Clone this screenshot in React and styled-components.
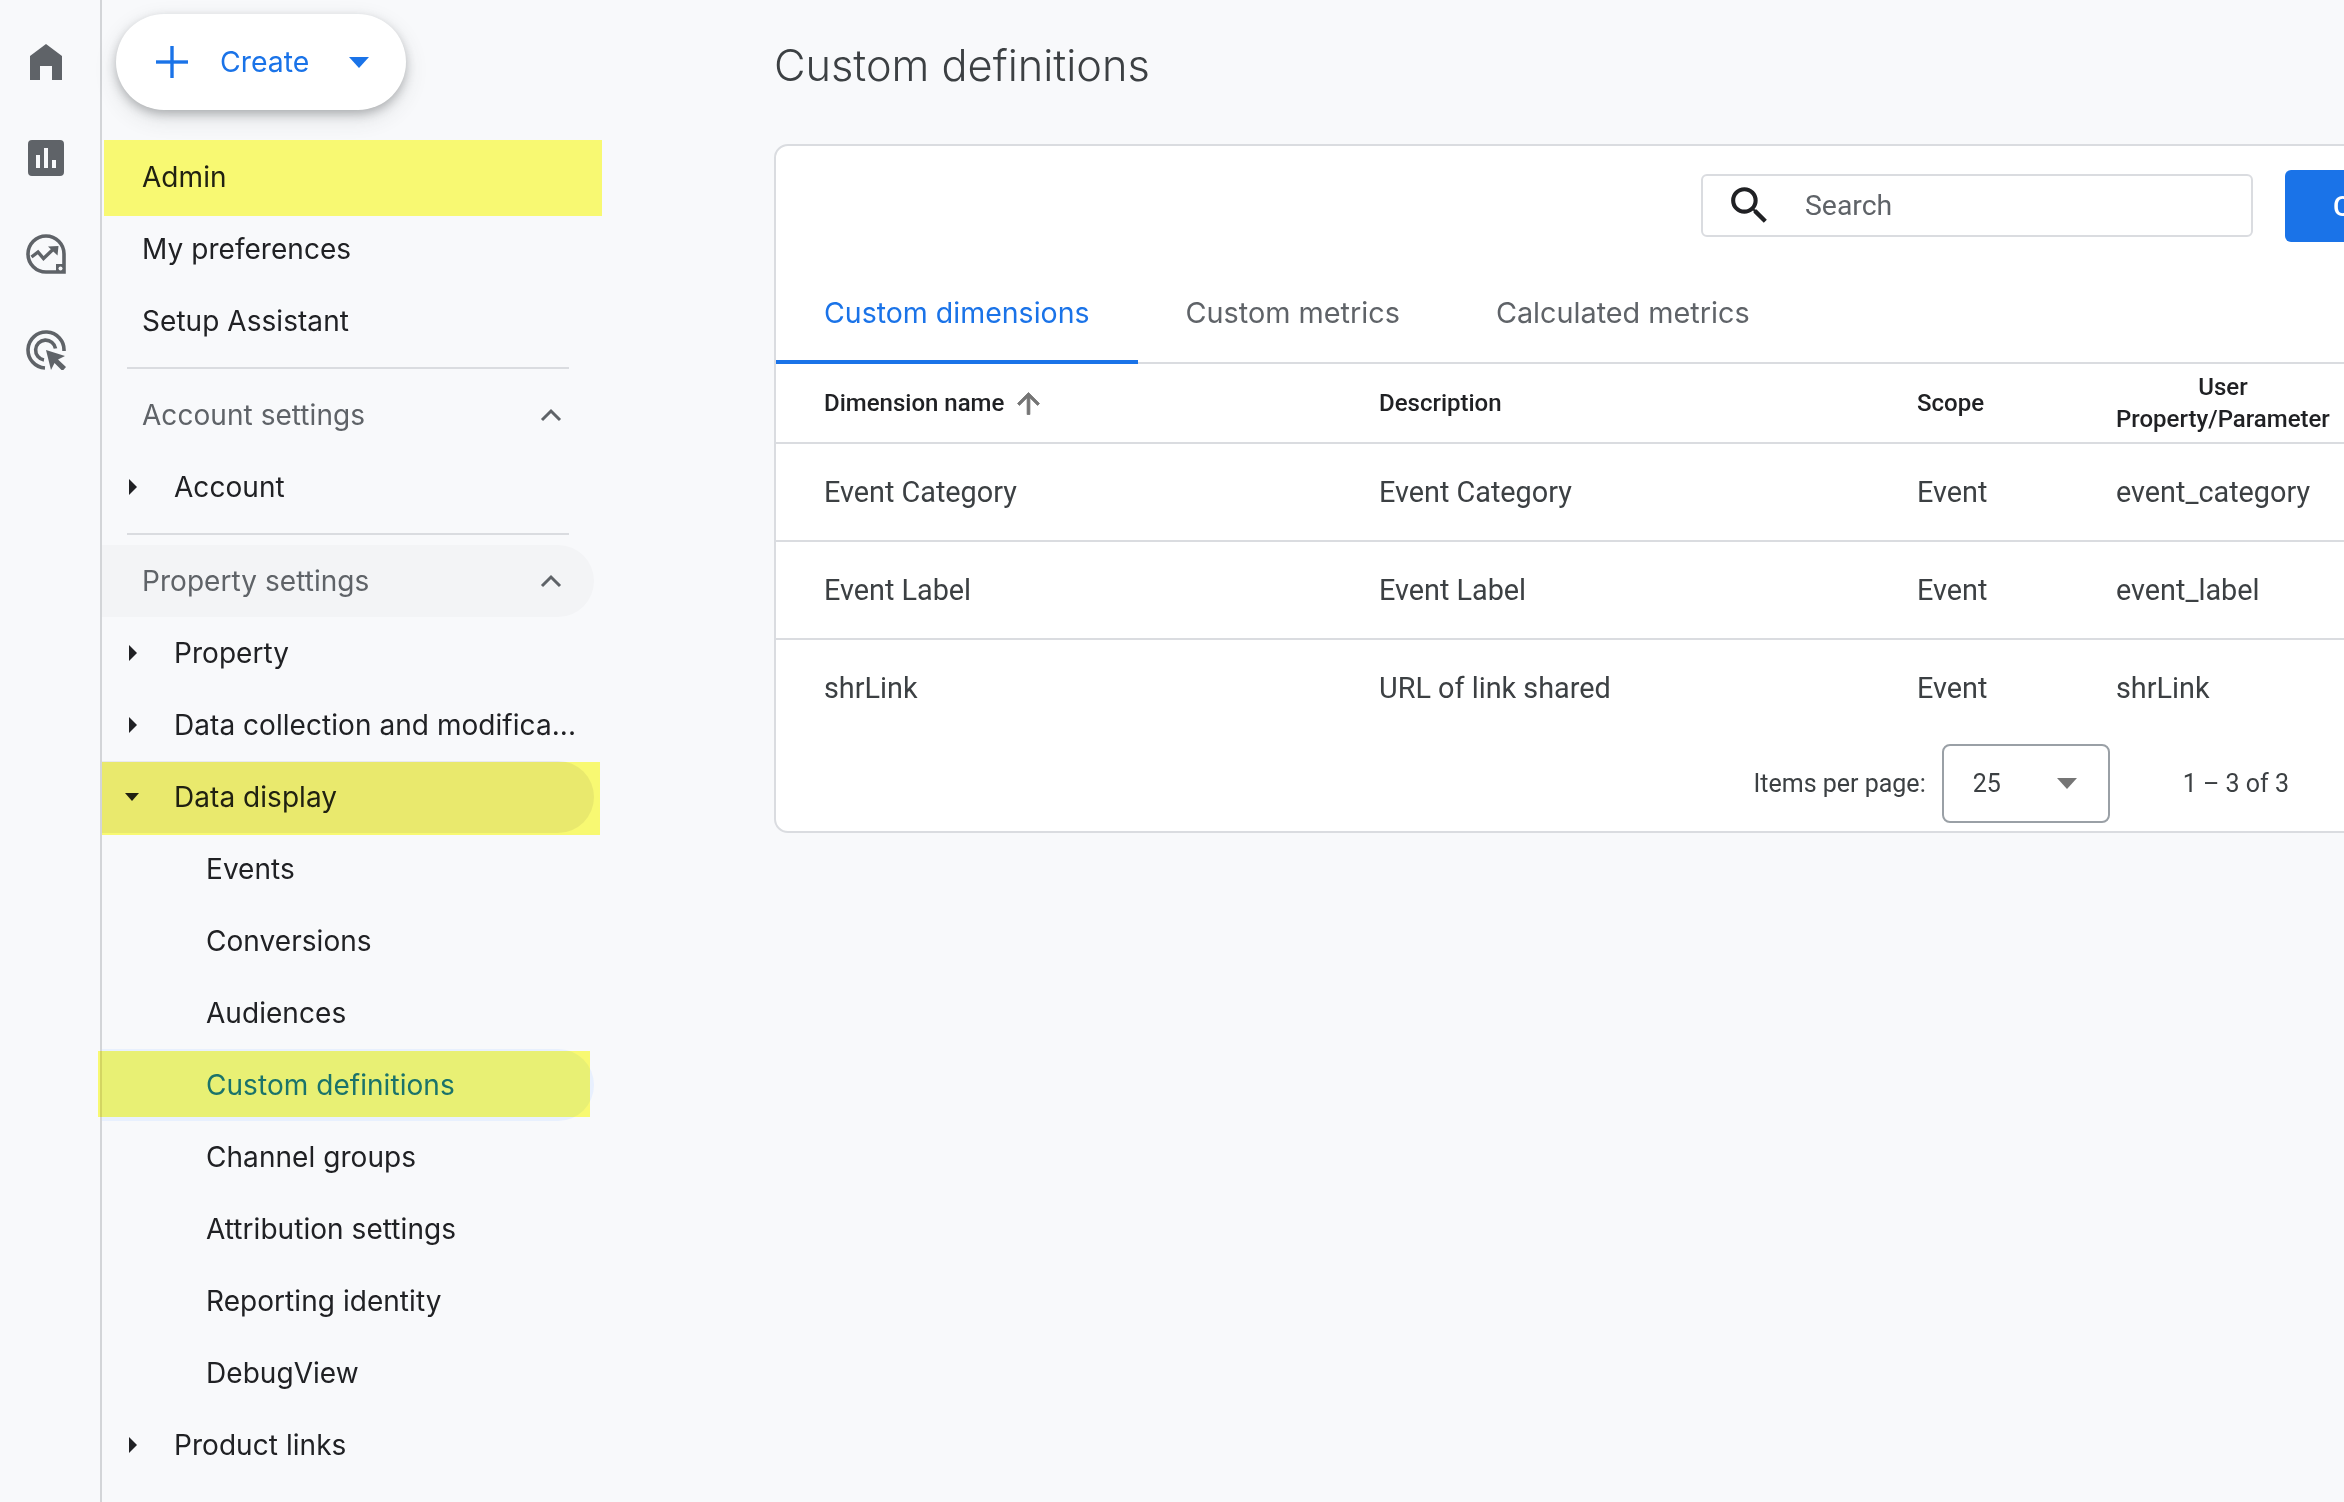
import React from "react";
import styled, { createGlobalStyle } from "styled-components";

const GlobalStyle = createGlobalStyle`
  html, body {
    margin: 0;
    padding: 0;
    background: #f8f9fb;
  }

  * {
    box-sizing: border-box;
  }
`;

const NAV_FONT = `Inter, "Noto Sans", sans-serif`;
const TABLE_FONT = `Roboto, "Liberation Sans", sans-serif`;

const Page = styled.div`
  display: flex;
  width: 2344px;
  height: 1502px;
  overflow: hidden;
  background: #f8f9fb;
`;

const Rail = styled.nav`
  flex: none;
  width: 102px;
  border-right: 2px solid #d3d5d8;
  display: flex;
  flex-direction: column;
  align-items: center;
  padding-top: 44px;
`;

const RailIcon = styled.svg`
  display: block;
  margin: 0 0 ${(p) => p.$after || 0}px -8px;
  fill: #5f6368;
`;

const Sidebar = styled.aside`
  flex: none;
  width: 500px;
  padding-top: 14px;
`;

const CreateButton = styled.button`
  display: flex;
  align-items: center;
  width: 290px;
  height: 96px;
  margin: 0 0 31px 14px;
  padding: 0 0 0 40px;
  border: none;
  border-radius: 48px;
  background: #fff;
  box-shadow: 0 4px 10px rgba(60, 64, 67, 0.3), 0 8px 22px rgba(60, 64, 67, 0.15);
  color: #1a73e8;
  font: 400 28.4px ${NAV_FONT};
`;

const CreateLabel = styled.span`
  margin: 0 40px 0 32px;
  padding-bottom: 2px;
`;

const NavRow = styled.div`
  position: relative;
  display: flex;
  align-items: center;
  width: 492px;
  height: 72px;
  padding: 0 10px 0 ${(p) => p.$indent}px;
  border-radius: 0 36px 36px 0;
  background: ${(p) => p.$bg || "transparent"};
  color: ${(p) => p.$color || "#202124"};
  font: 400 28px ${NAV_FONT};
  letter-spacing: 0.05px;
`;

const NavText = styled.span`
  flex: 1;
  min-width: 0;
  overflow: hidden;
  white-space: nowrap;
  text-overflow: ellipsis;
`;

const CaretSlot = styled.span`
  flex: none;
  width: 50px;
  display: flex;
  align-items: center;
  padding-left: ${(p) => (p.$open ? 1 : 5)}px;
`;

const ChevronSvg = styled.svg`
  flex: none;
  margin-right: 22px;
`;

// the yellow marker strokes sit over the nav rows
const Highlighter = styled.span`
  position: absolute;
  top: ${(p) => p.$top}px;
  bottom: ${(p) => p.$bottom}px;
  left: ${(p) => p.$left}px;
  right: ${(p) => p.$right}px;
  background: #ffff74;
  mix-blend-mode: multiply;
  pointer-events: none;
`;

const Divider = styled.div`
  width: 442px;
  height: 2px;
  margin: 10px 0 10px 25px;
  background: #dadce0;
`;

const Main = styled.main`
  flex: 1;
  min-width: 0;
  padding: 36px 0 0 172px;
  overflow: hidden;
`;

const Title = styled.h1`
  margin: 0 0 50px;
  font: 300 43.3px/58px ${NAV_FONT};
  color: #3c4043;
`;

const Card = styled.section`
  width: 1701px;
  height: 689px;
  border: 2px solid #dadce0;
  border-radius: 14px;
  background: #fff;
`;

const Toolbar = styled.div`
  display: flex;
  justify-content: flex-end;
  align-items: flex-start;
  gap: 32px;
  height: 122px;
  padding-top: 24px;
`;

const SearchBox = styled.div`
  display: flex;
  align-items: center;
  gap: 31px;
  width: 552px;
  height: 63px;
  margin-top: 4px;
  padding-left: 22px;
  border: 2px solid #dadce0;
  border-radius: 6px;
  color: #5f6368;
  font: 400 28.4px ${TABLE_FONT};
`;

const PrimaryButton = styled.button`
  width: 188px;
  height: 72px;
  padding: 0 0 0 48px;
  border: none;
  border-radius: 6px 0 0 6px;
  background: #1a73e8;
  color: #fff;
  text-align: left;
  font: 500 28px ${TABLE_FONT};
`;

const Tabs = styled.div`
  display: flex;
  height: 96px;
  border-bottom: 2px solid #dadce0;
`;

const Tab = styled.div`
  display: flex;
  align-items: center;
  height: 96px;
  padding: 0 48px 4px;
  border-bottom: 4px solid ${(p) => (p.$active ? "#1a73e8" : "transparent")};
  color: ${(p) => (p.$active ? "#1a73e8" : "#5f6368")};
  font: 400 ${(p) => (p.$active ? 28.5 : 28.8)}px ${NAV_FONT};
`;

const TableRow = styled.div`
  display: grid;
  grid-template-columns: 555px 538px 199px 1fr;
  align-items: center;
  height: ${(p) => p.$height}px;
  padding-left: 48px;
  border-bottom: ${(p) => (p.$last ? "none" : "2px solid #dadce0")};
`;

const HeadCell = styled.div`
  display: flex;
  align-items: center;
  gap: ${(p) => (p.$sorted ? 8 : 0)}px;
  color: #202124;
  font: 500 24px/32px ${TABLE_FONT};
`;

const StackedHead = styled.div`
  display: inline-block;
  text-align: center;
`;

const Cell = styled.div`
  color: #3c4043;
  font: 400 28.8px ${TABLE_FONT};
`;

const Paginator = styled.div`
  display: flex;
  justify-content: flex-end;
  align-items: center;
  height: 95px;
  padding-right: 184px;
  color: #3c4043;
  font: 400 25px ${TABLE_FONT};
`;

const PageSelect = styled.div`
  display: flex;
  align-items: center;
  justify-content: space-between;
  width: 168px;
  height: 79px;
  margin: 0 73px 0 16px;
  padding: 0 31px 0 29px;
  border: 2px solid #9aa0a6;
  border-radius: 8px;
`;

const Triangle = ({ w, h, dir = "down", color }) => (
  <svg width={w} height={h} viewBox={`0 0 ${w} ${h}`} fill={color} style={{ display: "block" }}>
    {dir === "down" ? (
      <polygon points={`0,0 ${w},0 ${w / 2},${h}`} />
    ) : (
      <polygon points={`0,0 ${w},${h / 2} 0,${h}`} />
    )}
  </svg>
);

const ChevronUp = () => (
  <ChevronSvg width="22" height="14" viewBox="0 0 22 14" fill="none" stroke="#5f6368" strokeWidth="3">
    <polyline points="2,12 11,3 20,12" />
  </ChevronSvg>
);

const HomeIcon = () => (
  <RailIcon $after={60} width="32" height="36" viewBox="0 0 32 36">
    <path d="M16 0 L32 12 V36 H22 V22 H10 V36 H0 V12 Z" />
  </RailIcon>
);

const BarsIcon = () => (
  <RailIcon $after={58} width="36" height="36" viewBox="0 0 36 36">
    <path
      fillRule="evenodd"
      d="M4 0 H32 A4 4 0 0 1 36 4 V32 A4 4 0 0 1 32 36 H4 A4 4 0 0 1 0 32 V4 A4 4 0 0 1 4 0 Z M8 15 V28 H12 V15 Z M16 8 V28 H20 V8 Z M24 20 V28 H28 V20 Z"
    />
  </RailIcon>
);

const TrendIcon = () => (
  <RailIcon $after={56} width="40" height="40" viewBox="0 0 40 40">
    <path
      fill="none"
      stroke="#5f6368"
      strokeWidth="3.6"
      d="M20 2 A18 18 0 0 1 38 20 V38 H20 A18 18 0 1 1 20 2 Z"
    />
    <path d="M30 30 H38 V38 H30 Z" />
    <circle cx="34.5" cy="34.5" r="2" fill="#f8f9fb" />
    <polyline
      points="5.5,23 12,18 17.5,24.5 28,14.5"
      fill="none"
      stroke="#5f6368"
      strokeWidth="3.4"
    />
    <polygon points="22,12.5 32.5,12 31.5,21.5" />
  </RailIcon>
);

const TargetIcon = () => (
  <RailIcon width="40" height="40" viewBox="0 0 40 40">
    <g fill="none" stroke="#5f6368" strokeWidth="3.6">
      <path d="M38 21 A18 18 0 1 0 19 38" />
      <path d="M29.5 18.5 A10 10 0 1 0 18 30" />
    </g>
    <polygon points="20,20 39,26 32,29.5 40,37 36.5,41 28.5,33 25,40" />
  </RailIcon>
);

const SearchGlyph = () => (
  <svg width="49" height="49" viewBox="0 0 24 24" fill="#202124">
    <path d="M15.5 14h-.79l-.28-.27A6.471 6.471 0 0 0 16 9.5 6.5 6.5 0 1 0 9.5 16c1.61 0 3.09-.59 4.23-1.57l.27.28v.79l5 4.99L20.49 19l-4.99-5zm-6 0C7.01 14 5 11.99 5 9.5S7.01 5 9.5 5 14 7.01 14 9.5 11.99 14 9.5 14z" />
  </svg>
);

const SortArrow = () => (
  <svg width="33" height="33" viewBox="0 0 24 24" fill="#757575" stroke="#757575" strokeWidth="0.6">
    <path d="M4 12l1.41 1.41L11 7.83V20h2V7.83l5.58 5.59L20 12l-8-8-8 8z" />
  </svg>
);

const PlusIcon = () => (
  <svg width="32" height="32" viewBox="0 0 32 32" stroke="#1a73e8" strokeWidth="3.4">
    <line x1="16" y1="0" x2="16" y2="32" />
    <line x1="0" y1="16" x2="32" y2="16" />
  </svg>
);

const subItems = [
  "Events",
  "Conversions",
  "Audiences",
  "Custom definitions",
  "Channel groups",
  "Attribution settings",
  "Reporting identity",
  "DebugView",
];

const rows = [
  ["Event Category", "Event Category", "Event", "event_category"],
  ["Event Label", "Event Label", "Event", "event_label"],
  ["shrLink", "URL of link shared", "Event", "shrLink"],
];

const ExpandRow = ({ children, open, ...rest }) => (
  <NavRow $indent={22} {...rest}>
    <CaretSlot $open={open}>
      {open ? <Triangle w={14} h={8} color="#202124" /> : <Triangle w={8} h={16} dir="right" color="#202124" />}
    </CaretSlot>
    <NavText>{children}</NavText>
  </NavRow>
);

const App = () => (
  <Page>
    <GlobalStyle />
    <Rail>
      <HomeIcon />
      <BarsIcon />
      <TrendIcon />
      <TargetIcon />
    </Rail>

    <Sidebar>
      <CreateButton>
        <PlusIcon />
        <CreateLabel>Create</CreateLabel>
        <Triangle w={20} h={11} color="#1a73e8" />
      </CreateButton>

      <NavRow $indent={40}>
        <NavText>Admin</NavText>
        <Highlighter $top={-1} $bottom={-3} $left={2} $right={-8} />
      </NavRow>
      <NavRow $indent={40}>
        <NavText>My preferences</NavText>
      </NavRow>
      <NavRow $indent={40}>
        <NavText>Setup Assistant</NavText>
      </NavRow>
      <Divider />

      <NavRow $indent={40} $color="#5f6368">
        <NavText>Account settings</NavText>
        <ChevronUp />
      </NavRow>
      <ExpandRow>Account</ExpandRow>
      <Divider />

      <NavRow $indent={40} $color="#5f6368" $bg="#f3f4f6">
        <NavText>Property settings</NavText>
        <ChevronUp />
      </NavRow>
      <ExpandRow>Property</ExpandRow>
      <ExpandRow>Data collection and modifica...</ExpandRow>
      <ExpandRow open $bg="#e9e9f0">
        Data display
        <Highlighter $top={1} $bottom={-2} $left={0} $right={-6} />
      </ExpandRow>

      {subItems.map((item) =>
        item === "Custom definitions" ? (
          <NavRow key={item} $indent={104} $color="#1a73e8" $bg="#e8f0fe">
            <NavText>{item}</NavText>
            <Highlighter $top={2} $bottom={4} $left={-4} $right={4} />
          </NavRow>
        ) : (
          <NavRow key={item} $indent={104}>
            <NavText>{item}</NavText>
          </NavRow>
        )
      )}
      <ExpandRow>Product links</ExpandRow>
    </Sidebar>

    <Main>
      <Title>Custom definitions</Title>
      <Card>
        <Toolbar>
          <SearchBox>
            <SearchGlyph />
            Search
          </SearchBox>
          <PrimaryButton>Create</PrimaryButton>
        </Toolbar>

        <Tabs>
          <Tab $active>Custom dimensions</Tab>
          <Tab>Custom metrics</Tab>
          <Tab>Calculated metrics</Tab>
        </Tabs>

        <TableRow $height={80}>
          <HeadCell $sorted>
            Dimension name
            <SortArrow />
          </HeadCell>
          <HeadCell>Description</HeadCell>
          <HeadCell>Scope</HeadCell>
          <HeadCell>
            <StackedHead>
              User
              <br />
              Property/Parameter
            </StackedHead>
          </HeadCell>
        </TableRow>

        {rows.map((row, i) => (
          <TableRow key={row[0]} $height={i === rows.length - 1 ? 96 : 98} $last={i === rows.length - 1}>
            {row.map((value, j) => (
              <Cell key={j}>{value}</Cell>
            ))}
          </TableRow>
        ))}

        <Paginator>
          Items per page:
          <PageSelect>
            25
            <Triangle w={20} h={11} color="#757575" />
          </PageSelect>
          1 – 3 of 3
        </Paginator>
      </Card>
    </Main>
  </Page>
);

export default App;
